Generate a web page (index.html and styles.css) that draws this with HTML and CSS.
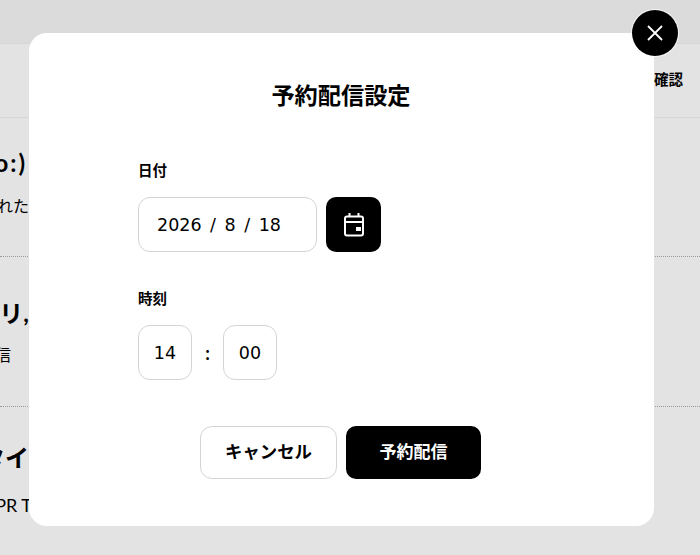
FILE: index.html
```html
<!DOCTYPE html>
<html lang="ja">
<head>
<meta charset="utf-8">
<title>予約配信設定</title>
<link rel="stylesheet" href="styles.css">
</head>
<body>
<div class="page">
  <div class="topbar"></div>
  <div class="steps"><span class="step-label">確認</span></div>
  <div class="row row-a">
    <div class="clip"><h3 class="row-title">Hello:)</h3></div>
    <div class="clip"><p class="row-text">届けられた</p></div>
  </div>
  <div class="row row-b">
    <div class="clip"><h3 class="row-title">カテゴアリ,</h3></div>
    <div class="clip"><p class="row-text row-text-short">配信</p></div>
  </div>
  <div class="row row-c">
    <div class="clip"><h3 class="row-title">タイ</h3></div>
    <div class="clip"><p class="row-text row-text-large">APR T</p></div>
  </div>
</div>

<section class="modal">
  <h2 class="modal-title">予約配信設定</h2>
  <div class="field field-date">
    <div class="label">日付</div>
    <div class="controls">
      <div class="input input-date">2026 / 8 / 18</div>
      <button class="cal-btn" type="button" aria-label="カレンダー">
        <svg class="cal-icon" viewBox="0 0 20 24" width="20" height="24" aria-hidden="true">
          <rect x="1" y="3.500" width="18" height="19" rx="2" fill="none" stroke="#fff" stroke-width="2"/>
          <path d="M5.500 0v4M14.500 0v4M1 9h18" fill="none" stroke="#fff" stroke-width="2"/>
          <rect x="12" y="14" width="5" height="4" fill="#fff"/>
        </svg>
      </button>
    </div>
  </div>
  <div class="field field-time">
    <div class="label">時刻</div>
    <div class="controls">
      <div class="input input-time">14</div>
      <span class="colon">:</span>
      <div class="input input-time">00</div>
    </div>
  </div>
  <div class="actions">
    <button class="btn btn-cancel" type="button">キャンセル</button>
    <button class="btn btn-submit" type="button">予約配信</button>
  </div>
  <button class="close" type="button" aria-label="閉じる">
    <svg viewBox="0 0 16 16" width="16" height="16" aria-hidden="true">
      <path d="M1 1l14 14M15 1L1 15" stroke="#fff" stroke-width="1.800" fill="none"/>
    </svg>
  </button>
</section>
</body>
</html>
```
FILE: styles.css
```css
* { box-sizing: border-box; }
html, body { margin: 0; padding: 0; }
body {
  width: 700px;
  height: 555px;
  overflow: hidden;
  position: relative;
  background: #e3e3e3;
  color: #000;
  font-family: Lato, "Noto Sans CJK JP", sans-serif;
}
.page { height: 555px; }
.topbar { height: 44px; background: #dbdbdb; border-bottom: 1px solid #d6d6d6; }
.steps {
  height: 74px;
  border-bottom: 1px solid #d6d6d6;
  display: flex;
  justify-content: flex-end;
  padding: 26px 17px 0 0;
}
.step-label { font-size: 14.500px; line-height: 20px; font-weight: 700; }
.row { border-bottom: 1px dotted #9a9a9a; }
.row-a { height: 139px; padding-top: 29px; }
.row-b { height: 150px; padding-top: 40px; }
.row-c { height: 100px; padding-top: 35px; border-bottom: 0; }
.clip {
  width: 29px;
  overflow: hidden;
  display: flex;
  justify-content: flex-end;
  white-space: nowrap;
}
.row-title { margin: 0 0 15px; font-size: 24px; line-height: 32px; font-weight: 700; flex: none; }
.row-a .row-title { letter-spacing: 2px; margin-right: 2px; }
.row-b .row-title { margin-bottom: 14px; }
.row-c .row-title { margin-bottom: 19px; }
.row-text { margin: 0; font-size: 16px; line-height: 24px; flex: none; }
.row-text-short { margin-right: 18px; }
.row-text-large { font-size: 18px; margin-right: -3px; }

.modal {
  position: absolute;
  left: 29px;
  top: 33px;
  width: 625px;
  height: 493px;
  background: #fff;
  border-radius: 18px;
  padding: 46px 0 0 109px;
}
.modal-title {
  margin: 0 0 0 -110px;
  font-size: 23.200px;
  line-height: 32px;
  font-weight: 700;
  text-align: center;
}
.field-date { margin-top: 50px; }
.field-time { margin-top: 37px; }
.label { font-size: 14.500px; line-height: 20px; font-weight: 700; margin-bottom: 16px; }
.controls { display: flex; align-items: center; }
.input {
  height: 55px;
  border: 1px solid #d4d4d4;
  border-radius: 12px;
  background: #fff;
  font-family: "DejaVu Sans", "Noto Sans CJK JP", sans-serif;
  font-size: 17.500px;
  display: flex;
  align-items: center;
}
.input-date { width: 179px; padding-left: 18px; word-spacing: 3px; }
.input-time { width: 54px; justify-content: center; }
.cal-btn {
  width: 55px;
  height: 55px;
  margin-left: 9px;
  padding: 0;
  border: 0;
  border-radius: 10px;
  background: #000;
  display: flex;
  align-items: center;
  justify-content: center;
}
.colon { width: 31px; text-align: center; font-size: 18px; font-weight: 700; }
.actions { display: flex; gap: 9px; margin: 46px 0 0 62px; }
.btn {
  height: 53px;
  border-radius: 12px;
  font-family: inherit;
  font-weight: 700;
  padding: 0 0 4px;
}
.btn-cancel { width: 137px; font-size: 17.400px; background: #fff; color: #000; border: 1px solid #d4d4d4; }
.btn-submit { width: 135px; font-size: 17px; background: #000; color: #fff; border: 0; border-radius: 10px; }
.close {
  position: absolute;
  left: 603px;
  top: -23px;
  width: 46px;
  height: 46px;
  padding: 0;
  border: 0;
  border-radius: 50%;
  background: #000;
  box-shadow: 0 0 0 1px rgba(255, 255, 255, .7);
  display: flex;
  align-items: center;
  justify-content: center;
}
```
